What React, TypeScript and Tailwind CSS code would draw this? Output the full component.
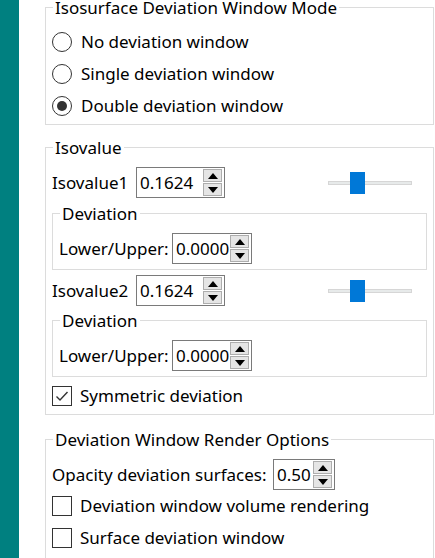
import React from 'react';

const font = { fontFamily: '"Noto Sans", "Open Sans", Arial, sans-serif' };

function Group({ title, className = '', children }: { title: string; className?: string; children: React.ReactNode }) {
  return (
    <fieldset className={`border border-[#dcdcdc] px-[6px] ${className}`}>
      <legend className="ml-[1px] px-[2px] text-[17px] leading-[17px] text-[#000]">{title}</legend>
      {children}
    </fieldset>
  );
}

function Radio({ label, checked }: { label: string; checked?: boolean }) {
  return (
    <div className="flex h-[32px] items-center">
      <span className="flex h-[20px] w-[20px] items-center justify-center rounded-full border border-[#333] bg-white">
        {checked && <span className="h-[10px] w-[10px] rounded-full bg-[#333]" />}
      </span>
      <span className="ml-[9px] text-[17px]">{label}</span>
    </div>
  );
}

function Check({ label, checked }: { label: string; checked?: boolean }) {
  return (
    <div className="flex h-[32px] items-center">
      <span className="flex h-[20px] w-[20px] items-center justify-center border border-[#333] bg-white">
        {checked && (
          <svg width="14" height="14" viewBox="0 0 14 14">
            <path d="M1.5 7.5 L5 11 L12.5 3" fill="none" stroke="#333" strokeWidth="1.4" />
          </svg>
        )}
      </span>
      <span className="ml-[8px] text-[17px]">{label}</span>
    </div>
  );
}

function Spin({ value, width }: { value: string; width: string }) {
  return (
    <div className={`flex h-[31px] items-stretch border border-[#7a7a7a] bg-white ${width}`}>
      <span className="flex flex-1 items-center pl-[3px] text-[17px]">{value}</span>
      <div className="my-[1px] mr-[2px] flex w-[19px] flex-col gap-[1px]">
        <span className="flex flex-1 items-center justify-center border border-[#adadad] bg-[#e5e5e5]">
          <svg width="10" height="6" viewBox="0 0 10 6"><path d="M0 6 L5 0 L10 6 Z" fill="#000" /></svg>
        </span>
        <span className="flex flex-1 items-center justify-center border border-[#adadad] bg-[#e5e5e5]">
          <svg width="10" height="6" viewBox="0 0 10 6"><path d="M0 0 L5 6 L10 0 Z" fill="#000" /></svg>
        </span>
      </div>
    </div>
  );
}

function Slider() {
  return (
    <div className="relative ml-auto mr-[15px] flex h-[22px] w-[84px] items-center">
      <div className="h-[4px] w-full border border-[#d6d6d6] bg-[#e7eaea]" />
      <div className="absolute left-[22px] top-0 h-[22px] w-[15px] bg-[#0078d7]" />
    </div>
  );
}

function IsoRow({ label, value }: { label: string; value: string }) {
  return (
    <div className="flex h-[31px] items-center">
      <span className="w-[84px] text-[17px]">{label}</span>
      <Spin value={value} width="w-[89px]" />
      <Slider />
    </div>
  );
}

function Deviation({ className = '' }: { className?: string }) {
  return (
    <Group title="Deviation" className={`pb-[5px] ${className}`}>
      <div className="mt-[11px] flex h-[31px] items-center">
        <span className="w-[113px] text-[17px]">Lower/Upper:</span>
        <Spin value="0.0000" width="w-[80px]" />
      </div>
    </Group>
  );
}

export default function App() {
  return (
    <div className="flex h-[558px] w-[435px] overflow-hidden bg-white text-[#000]" style={font}>
      <div className="w-[19px] shrink-0 bg-[#008080]" />
      <div className="flex-1 pl-[26px] pr-[1px]">
        <Group title="Isosurface Deviation Window Mode" className="-mt-[1px] pb-[2px]">
          <div className="mt-[10px]">
            <Radio label="No deviation window" />
            <Radio label="Single deviation window" />
            <Radio label="Double deviation window" checked />
          </div>
        </Group>

        <Group title="Isovalue" className="mt-[14px] pb-[2px]">
          <div className="mt-[11px]">
            <IsoRow label="Isovalue1" value="0.1624" />
          </div>
          <Deviation className="mt-[7px]" />
          <div className="mt-[5px]">
            <IsoRow label="Isovalue2" value="0.1624" />
          </div>
          <Deviation className="mt-[6px]" />
          <div className="mt-[3px]">
            <Check label="Symmetric deviation" checked />
          </div>
        </Group>

        <Group title="Deviation Window Render Options" className="mt-[16px] pb-[20px]">
          <div className="mt-[11px] flex h-[31px] items-center">
            <span className="w-[221px] text-[17px]">Opacity deviation surfaces:</span>
            <Spin value="0.50" width="w-[62px]" />
          </div>
          <Check label="Deviation window volume rendering" />
          <Check label="Surface deviation window" />
        </Group>
      </div>
    </div>
  );
}
